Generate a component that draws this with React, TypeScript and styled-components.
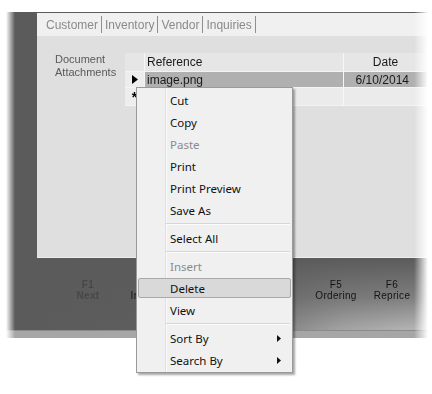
import React from 'react';
import styled, { createGlobalStyle } from 'styled-components';

const GlobalStyle = createGlobalStyle`
  html, body {
    margin: 0;
    padding: 0;
    background: #ffffff;
  }
  body {
    font-family: "Liberation Sans", Arial, sans-serif;
  }
`;

const Stage = styled.div`
  position: relative;
  width: 432px;
  height: 394px;
  padding: 12px 4px 0 6px;
  box-sizing: border-box;
  overflow: hidden;
`;

const Frame = styled.div`
  display: flex;
  flex-direction: column;
  width: 422px;
  padding-top: 1px;
  background: #5b5b5b;
  -webkit-mask-image: linear-gradient(to right, transparent 0, #000 9px, #000 408px, transparent 422px);
  mask-image: linear-gradient(to right, transparent 0, #000 9px, #000 408px, transparent 422px);
`;

const Panel = styled.div`
  display: flex;
  flex-direction: column;
  height: 245px;
  margin-left: 31px;
  background: #dfdfdf;
  border-bottom: 1px solid #efefef;
  box-sizing: border-box;
`;

const TabBar = styled.div`
  display: flex;
  align-items: center;
  gap: 3px;
  height: 23px;
  padding-left: 9px;
  background: #f0f0f0;
  font-size: 12px;
  color: #8a8a8a;
`;

const Tab = styled.span`
  line-height: 14px;
`;

const TabDivider = styled.span`
  width: 1px;
  height: 17px;
  background: #8f8f8f;
`;

const Body = styled.div`
  display: flex;
  flex: 1;
  padding: 17px 0 0 18px;
`;

const FieldLabel = styled.div`
  width: 70px;
  font-size: 11px;
  line-height: 13px;
  color: #5a5a5a;
`;

const Grid = styled.div`
  display: grid;
  flex: 1;
  align-self: flex-start;
  grid-template-columns: 20px 199px 1fr;
  grid-template-rows: 19px 16px 18px;
  font-size: 12px;
  color: #1a1a1a;
`;

const Cell = styled.div<{ $tone: 'head' | 'selected' | 'new' | 'rowhead'; $align?: 'left' | 'center' | 'right' }>`
  display: flex;
  align-items: center;
  justify-content: ${(p) => (p.$align === 'center' ? 'center' : p.$align === 'right' ? 'flex-end' : 'flex-start')};
  padding: 0 ${(p) => (p.$align === 'right' ? '18px' : '2px')} 0 2px;
  border-right: 1px solid #f6f6f6;
  border-bottom: 1px solid #f4f4f4;
  background: ${(p) =>
    p.$tone === 'head' ? '#e6e6e6' : p.$tone === 'selected' ? '#b0b0b0' : p.$tone === 'rowhead' ? '#ededed' : '#ebebeb'};
  white-space: nowrap;
  overflow: hidden;
`;

const RowMark = styled.span`
  font-weight: bold;
  font-size: 14px;
  line-height: 12px;
  color: #000;
`;

const Toolbar = styled.div`
  display: flex;
  height: 72px;
  padding-left: 54px;
  background:
    linear-gradient(to bottom, #5b5b5b 0%, rgba(91, 91, 91, 0.6) 55%, rgba(91, 91, 91, 0) 100%),
    linear-gradient(to right, #5b5b5b 0%, #5e5e5e 45%, #a4a4a4 80%, #b8b8b8 100%);
`;

const FKey = styled.div<{ $w: number; $off?: boolean }>`
  width: ${(p) => p.$w}px;
  padding-top: 21px;
  text-align: center;
  font-size: 10px;
  line-height: 11px;
  letter-spacing: 0.3px;
  font-weight: ${(p) => (p.$off ? 'bold' : 'normal')};
  color: ${(p) => (p.$off ? '#484848' : '#141414')};
`;

const Band = styled.div`
  height: 7px;
  background: #a6a6a6;
  border-top: 1px solid #8a8a8a;
`;

const Menu = styled.div`
  position: absolute;
  left: 136px;
  top: 87px;
  width: 157px;
  padding: 1px 0;
  box-sizing: border-box;
  background: #f0f0f0;
  border: 1px solid #9a9a9a;
  box-shadow: 2px 2px 2px rgba(0, 0, 0, 0.35);
  font-family: "Noto Sans", "Liberation Sans", sans-serif;
  font-size: 11.5px;
  color: #111;
`;

const Gutter = styled.div`
  position: absolute;
  left: 28px;
  top: 0;
  bottom: 0;
  width: 1px;
  background: #e0e0e0;
  border-right: 1px solid #fafafa;
`;

const Item = styled.div<{ $off?: boolean; $hot?: boolean }>`
  position: relative;
  display: flex;
  align-items: center;
  justify-content: space-between;
  height: 22px;
  margin: 0 1px;
  padding: 0 10px 0 32px;
  box-sizing: border-box;
  color: ${(p) => (p.$off ? '#8a8a8a' : '#111')};
  ${(p) =>
    p.$hot
      ? `
    height: 20px;
    margin: 1px 1px;
    padding-left: 31px;
    background: #d9d9d9;
    border: 1px solid #a9a9a9;
    border-radius: 2px;
    z-index: 1;
  `
      : ''}
`;

const Separator = styled.div`
  position: relative;
  height: 6px;
  margin-left: 29px;
  margin-right: 2px;
  &::after {
    content: '';
    position: absolute;
    left: 0;
    right: 0;
    top: 2px;
    height: 1px;
    background: #d7d7d7;
    border-bottom: 1px solid #fbfbfb;
  }
`;

type Entry = { label?: string; off?: boolean; hot?: boolean; sub?: boolean; sep?: boolean };

const entries: Entry[] = [
  { label: 'Cut' },
  { label: 'Copy' },
  { label: 'Paste', off: true },
  { label: 'Print' },
  { label: 'Print Preview' },
  { label: 'Save As' },
  { sep: true },
  { label: 'Select All' },
  { sep: true },
  { label: 'Insert', off: true },
  { label: 'Delete', hot: true },
  { label: 'View' },
  { sep: true },
  { label: 'Sort By', sub: true },
  { label: 'Search By', sub: true },
];

// F3 and F4 sit under the open menu, so their slots stay blank
const fkeys = [
  { key: 'F1', name: 'Next', w: 56, off: true },
  { key: 'F2', name: 'Insert', w: 56 },
  { key: '', name: '', w: 56 },
  { key: '', name: '', w: 80 },
  { key: 'F5', name: 'Ordering', w: 56 },
  { key: 'F6', name: 'Reprice', w: 56 },
];

const SubArrow = () => (
  <svg width="4" height="7" viewBox="0 0 4 7">
    <polygon points="0,0 4,3.5 0,7" fill="#111" />
  </svg>
);

const RowArrow = () => (
  <svg width="6" height="9" viewBox="0 0 6 9">
    <polygon points="0,0 6,4.5 0,9" fill="#000" />
  </svg>
);

const App: React.FC = () => {
  return (
    <Stage>
      <GlobalStyle />
      <Frame>
        <Panel>
          <TabBar>
            <Tab>Customer</Tab>
            <TabDivider />
            <Tab>Inventory</Tab>
            <TabDivider />
            <Tab>Vendor</Tab>
            <TabDivider />
            <Tab>Inquiries</Tab>
            <TabDivider />
          </TabBar>
          <Body>
            <FieldLabel>
              Document
              <br />
              Attachments
            </FieldLabel>
            <Grid>
              <Cell $tone="head" />
              <Cell $tone="head">Reference</Cell>
              <Cell $tone="head" $align="center">Date</Cell>
              <Cell $tone="rowhead" $align="center">
                <RowArrow />
              </Cell>
              <Cell $tone="selected">image.png</Cell>
              <Cell $tone="selected" $align="right">6/10/2014</Cell>
              <Cell $tone="rowhead" $align="center">
                <RowMark>*</RowMark>
              </Cell>
              <Cell $tone="new" />
              <Cell $tone="new" />
            </Grid>
          </Body>
        </Panel>
        <Toolbar>
          {fkeys.map((f, i) => (
            <FKey key={i} $w={f.w} $off={f.off}>
              {f.key}
              <br />
              {f.name}
            </FKey>
          ))}
        </Toolbar>
        <Band />
      </Frame>
      <Menu>
        <Gutter />
        {entries.map((e, i) =>
          e.sep ? (
            <Separator key={i} />
          ) : (
            <Item key={i} $off={e.off} $hot={e.hot}>
              <span>{e.label}</span>
              {e.sub && <SubArrow />}
            </Item>
          )
        )}
      </Menu>
    </Stage>
  );
};

export default App;
